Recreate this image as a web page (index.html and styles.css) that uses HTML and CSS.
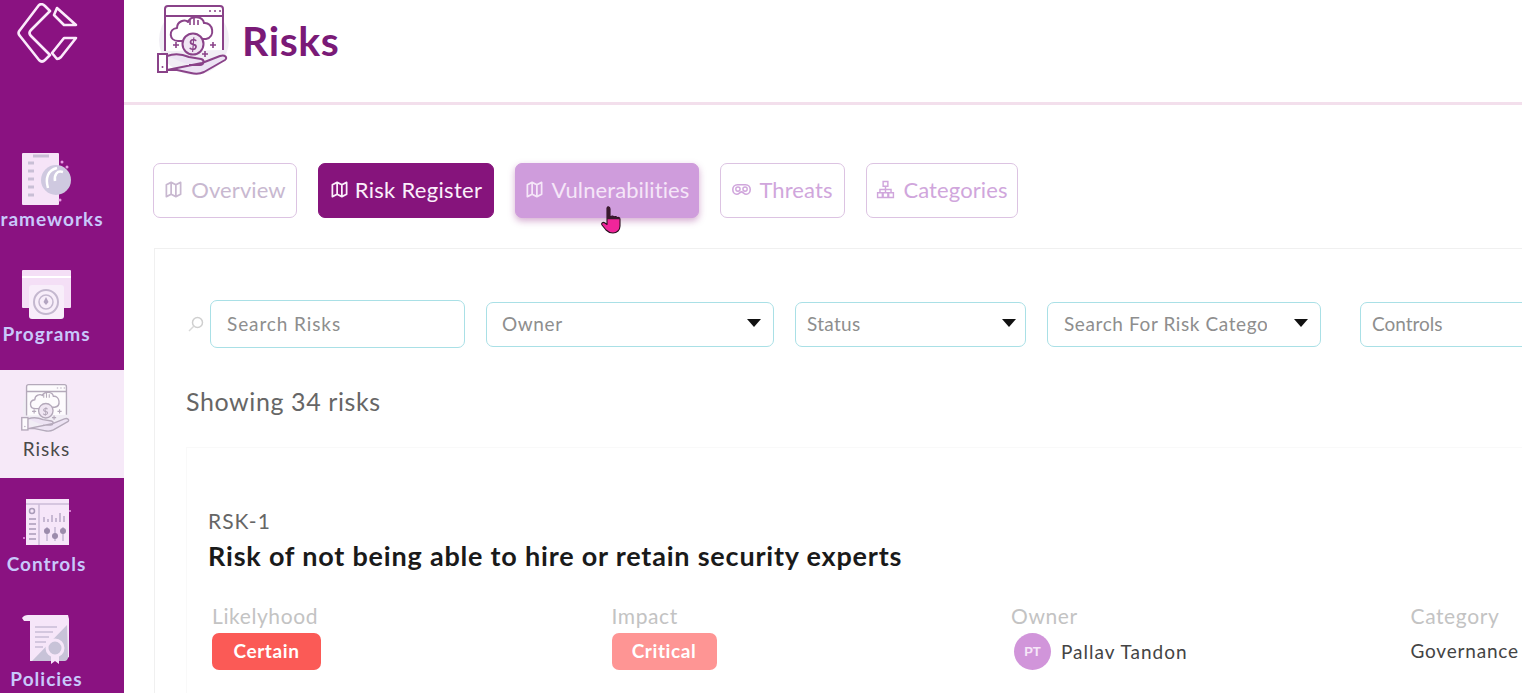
FILE: index.html
```html
<!DOCTYPE html>
<html lang="en">

<head>
  <meta charset="UTF-8">
  <title>Risks</title>
  <link rel="stylesheet" href="styles.css">
</head>

<body>
  <svg class="sprites" width="0" height="0">
    <symbol id="i-map" viewBox="0 0 24 24">
      <path d="M3 6l6-3 6 3 6-3v15l-6 3-6-3-6 3z M9 3v15 M15 6v15" fill="none" stroke="currentColor" stroke-width="2.2" stroke-linejoin="round" />
    </symbol>
    <symbol id="i-risk" viewBox="0 0 80 75">
      <circle cx="40" cy="36" r="35" fill="#f1eef5" class="blob" />
      <path d="M11 47V5q0-3 3-3h52q3 0 3 3v41" fill="#fff" stroke="currentColor" stroke-width="2" />
      <path d="M11 12h58" fill="none" stroke="currentColor" stroke-width="2" />
      <path d="M55 7h2M60 7h2M65 7h2" stroke="currentColor" stroke-width="1.6" />
      <path d="M30 37h-6c-9 0-10-12-1-13 0-7 8-9 11-6 3-7 15-6 16 1 9-1 12 14 2 16h-4" fill="#fff" stroke="currentColor" stroke-width="2" stroke-linejoin="round" />
      <path d="M36 16v5M40 14v7M44 16v5" stroke="currentColor" stroke-width="1.6" />
      <circle cx="39" cy="40" r="10.5" fill="#f0e6f3" stroke="currentColor" stroke-width="2" />
      <text x="39" y="45.5" text-anchor="middle" class="risk-dollar" fill="currentColor">$</text>
      <path d="M19 41h6M22 38v6M56 41h6M59 38v6M48 50h6M51 47v6" stroke="currentColor" stroke-width="1.6" />
      <path d="M13 52c8-3 15-2 22 1l12 2c4 1 3 6-1 6H35M48 59l18-7c5-2 8 2 5 4L50 68c-4 2-9 2-13 1l-14-3H13z" fill="#ece3f4" stroke="currentColor" stroke-width="2" stroke-linejoin="round" />
      <rect x="4" y="50" width="9" height="18" fill="#fff" stroke="currentColor" stroke-width="2" />
      <circle cx="8.500" cy="63" r="1" fill="currentColor" />
    </symbol>
  </svg>

  <div class="app">
    <aside class="sidebar">
      <div class="logo">
        <svg width="62" height="60" viewBox="0 0 62 60">
          <path d="M22 2Q25 0 28 3L33 8 14 27Q11 30 14 33L33 52 28 57Q25 60 22 57L3 33Q0 30 3 27Z" fill="none" stroke="#fbeafb" stroke-width="2.600" stroke-linejoin="round" />
          <path d="M40 5L59 22H47L37 12ZM59 35H47L35 50 40 56Q42 56 44 54Z" fill="none" stroke="#fbeafb" stroke-width="2.600" stroke-linejoin="round" />
        </svg>
      </div>
      <a href="#" class="nav-item">
        <svg class="nav-icon" viewBox="0 0 52 52">
          <rect x="1" y="0" width="37" height="52" rx="1" fill="#f6e4f8" />
          <path d="M12 3h16M7 10h6M7 18h6M7 26h6M7 34h6M7 42h6" stroke="#c9bfd6" stroke-width="3" />
          <circle cx="35" cy="27" r="15" fill="#cfc9e0" />
          <path d="M36 15c-9 2-12 10-9 20M42 19c-6-2-9 3-8 9" fill="none" stroke="#fff" stroke-width="2.500" />
          <circle cx="41" cy="9" r="1.500" fill="#e99be6" />
          <circle cx="46" cy="14" r="1.500" fill="#e99be6" />
          <circle cx="39" cy="47" r="1.500" fill="#e99be6" />
        </svg>
        <span>Frameworks</span>
      </a>
      <a href="#" class="nav-item">
        <svg class="nav-icon" viewBox="0 0 52 52">
          <rect x="1" y="2" width="49" height="38" rx="1" fill="#f4dff6" />
          <path d="M1 9h49" stroke="#fff" stroke-width="2" />
          <rect x="8" y="17" width="35" height="34" rx="3" fill="#f8eefa" />
          <circle cx="25" cy="34" r="12" fill="none" stroke="#c4b8cf" stroke-width="2" />
          <circle cx="25" cy="34" r="7" fill="none" stroke="#c4b8cf" stroke-width="1.500" />
          <path d="M25 29l2.500 5-2.500 3-2.500-3z" fill="#b3a5c1" />
        </svg>
        <span>Programs</span>
      </a>
      <a href="#" class="nav-item is-active">
        <svg class="nav-icon nav-icon-risk">
          <use href="#i-risk" />
        </svg>
        <span>Risks</span>
      </a>
      <a href="#" class="nav-item">
        <svg class="nav-icon" viewBox="0 0 52 52">
          <rect x="5" y="1" width="43" height="46" fill="#f6e6f9" />
          <path d="M5 6h43M18 6v41" stroke="#cbbcd8" stroke-width="1.500" />
          <circle cx="11" cy="13" r="2.500" fill="none" stroke="#a99bb8" stroke-width="1.500" />
          <path d="M8 21h7M8 26h7M8 31h7M8 36h7M8 41h7" stroke="#a99bb8" stroke-width="1.500" />
          <path d="M23 24v-5M27 24v-3M31 24v-7M35 24v-4M39 24v-9M43 24v-6" stroke="#b8a9c6" stroke-width="1.500" />
          <path d="M26 29v14M34 29v14M42 29v14" stroke="#c4b6d2" stroke-width="1.500" />
          <circle cx="26" cy="33" r="3" fill="#9c8bac" />
          <circle cx="34" cy="38" r="3" fill="#9c8bac" />
          <circle cx="42" cy="33" r="3" fill="#9c8bac" />
          <circle cx="49" cy="13" r="1" fill="#e99be6" />
          <circle cx="3" cy="40" r="1" fill="#e99be6" />
        </svg>
        <span>Controls</span>
      </a>
      <a href="#" class="nav-item">
        <svg class="nav-icon" viewBox="0 0 52 52">
          <path d="M1 5q2-3 6-3h40l1 4v38q-5 4-9 4H9V8H3z" fill="#f6e6f9" />
          <path d="M46 12L11 48h33q3-1 3-4z" fill="#c8c3d8" />
          <path d="M14 14h22M14 19h18M14 24h14M14 29h11M14 34h8" stroke="#c9bdd6" stroke-width="1.500" />
          <circle cx="34" cy="35" r="8" fill="none" stroke="#f6e6f9" stroke-width="3" />
          <path d="M30 42v9l4-3 4 3v-9z" fill="#f6e6f9" />
        </svg>
        <span>Policies</span>
      </a>
    </aside>

    <main class="content">
      <header class="page-head">
        <svg class="head-icon">
          <use href="#i-risk" />
        </svg>
        <h1>Risks</h1>
      </header>

      <nav class="tabs">
        <a href="#" class="tab tab-overview">
          <svg class="tab-icon"><use href="#i-map" /></svg>Overview
        </a>
        <a href="#" class="tab tab-register">
          <svg class="tab-icon"><use href="#i-map" /></svg>Risk Register
        </a>
        <a href="#" class="tab tab-vuln">
          <svg class="tab-icon"><use href="#i-map" /></svg>Vulnerabilities
        </a>
        <a href="#" class="tab tab-threats">
          <svg class="tab-icon" viewBox="0 0 24 24">
            <path d="M7 6h10c4 0 6 3 6 6s-2 6-5 6c-3 0-4-3-6-3s-3 3-6 3c-3 0-5-3-5-6s2-6 6-6z" fill="none" stroke="currentColor" stroke-width="2" />
            <circle cx="7.500" cy="11.500" r="2.700" fill="none" stroke="currentColor" stroke-width="1.800" />
            <circle cx="16.500" cy="11.500" r="2.700" fill="none" stroke="currentColor" stroke-width="1.800" />
          </svg>Threats
        </a>
        <a href="#" class="tab tab-categories">
          <svg class="tab-icon" viewBox="0 0 24 24">
            <path d="M9 2h6v6H9zM2 16h6v6H2zM9 16h6v6H9zM16 16h6v6h-6zM12 8v8M5 16v-4h14v4" fill="none" stroke="currentColor" stroke-width="1.800" />
          </svg>Categories
        </a>
      </nav>

      <section class="panel">
        <div class="filters">
          <svg class="search-icon" viewBox="0 0 16 16">
            <circle cx="9.500" cy="6.500" r="5" fill="none" stroke="#cfcfcf" stroke-width="1.500" />
            <path d="M6 10l-5 5" stroke="#d8d8d8" stroke-width="1.500" />
          </svg>
          <div class="field field-search">Search Risks</div>
          <div class="field field-owner">Owner<i class="caret"></i></div>
          <div class="field field-status">Status<i class="caret"></i></div>
          <div class="field field-category"><span class="clip">Search For Risk Category</span><i class="caret"></i></div>
          <div class="field field-controls">Controls</div>
        </div>

        <p class="count">Showing 34 risks</p>

        <article class="risk-card">
          <div class="risk-id">RSK-1</div>
          <h2>Risk of not being able to hire or retain security experts</h2>
          <div class="risk-meta">
            <div>
              <div class="meta-label">Likelyhood</div>
              <span class="chip chip-certain">Certain</span>
            </div>
            <div>
              <div class="meta-label">Impact</div>
              <span class="chip chip-critical">Critical</span>
            </div>
            <div>
              <div class="meta-label">Owner</div>
              <div class="meta-owner"><span class="avatar">PT</span>Pallav Tandon</div>
            </div>
            <div>
              <div class="meta-label">Category</div>
              <div class="meta-value">Governance</div>
            </div>
          </div>
        </article>
      </section>
    </main>
  </div>

  <!-- screen recording pointer over the Vulnerabilities tab -->
  <svg class="pointer" viewBox="0 0 22 28">
    <path d="M6 2c1-2 3-1 3 1v8l1-.5c1-1 2.500-.5 3 .5 1-1 2.500-.5 3 .7 1-.7 3-.2 3 1.500V20c0 4-3 7-7 7-3 0-5-1-7-3l-4-5c-1-2 1-3.500 3-2l2 1.500z" fill="#f0259a" stroke="#2a1020" stroke-width="1.100" stroke-linejoin="round" />
    <path d="M6 2c1-2 3-1 3 1v8l1-.5c1-1 2.500-.5 3 .5 1-1 2.500-.5 3 .7 1-.7 3-.2 3 1.500H6z" fill="#3a1a2e" />
  </svg>
</body>

</html>
```

FILE: styles.css
```css
* {
  box-sizing: border-box;
}

body,
h1,
h2,
p {
  margin: 0;
  padding: 0;
}

body {
  height: 100vh;
  overflow: hidden;
  font-family: "Lato", "Open Sans", sans-serif;
  color: #444;
  background: #fff;
}

a {
  text-decoration: none;
}

.sprites {
  position: absolute;
}

.risk-dollar {
  font-family: "Lato", sans-serif;
  font-size: 15px;
  font-weight: 700;
}

.app {
  display: flex;
  height: 693px;
}

/* sidebar */
.sidebar {
  flex: none;
  width: 124px;
  height: 100%;
  overflow: hidden;
  background: #8a1281;
}

.logo {
  height: 140px;
  padding: 3px 0 0 17px;
}

.logo svg {
  filter: blur(0.4px);
}

.nav-item {
  display: flex;
  flex-direction: column;
  align-items: center;
  width: 124px;
  height: 108px;
  margin-bottom: 7px;
  padding: 13px 31px 0 0;
  color: #c8c8fb;
  font-size: 19px;
  font-weight: 700;
  letter-spacing: 1px;
  line-height: 20px;
}

.nav-item span {
  margin-top: 4px;
  white-space: nowrap;
}

.nav-item.is-active {
  background: #f6e9f8;
  color: #4a4a4a;
  font-weight: 400;
}

.nav-icon {
  flex: none;
  width: 52px;
  height: 52px;
  filter: blur(0.5px);
}

.nav-icon-risk {
  width: 55px;
  color: #a99eb0;
  opacity: 0.85;
}

.nav-icon-risk .blob {
  display: none;
}

/* main column */
.content {
  flex: 1;
  min-width: 0;
  overflow: hidden;
}

.page-head {
  display: flex;
  align-items: center;
  gap: 8px;
  height: 105px;
  padding: 0 0 20px 30px;
  border-bottom: 3px solid #f3dfec;
}

.head-icon {
  flex: none;
  width: 80px;
  height: 75px;
  color: #8a4389;
  filter: blur(0.4px);
}

.page-head h1 {
  color: #7a1a77;
  font-size: 41px;
  font-weight: 700;
  letter-spacing: 0.6px;
  line-height: 50px;
}

.tabs {
  display: flex;
  gap: 21px;
  padding: 58px 0 0 29px;
}

.tab {
  display: flex;
  align-items: center;
  justify-content: center;
  gap: 8px;
  height: 55px;
  padding-bottom: 3px;
  border: 1.500px solid #dcc3e2;
  border-radius: 7px;
  color: #d0a6dc;
  font-size: 22px;
  letter-spacing: 0.1px;
}

.tab-overview {
  width: 144px;
  color: #c8b8d0;
}

.tab-register {
  gap: 6px;
  width: 176px;
  border-color: #86147c;
  background: #86147c;
  color: #fbeffb;
  letter-spacing: 0.3px;
}

.tab-vuln {
  width: 184px;
  border-color: #cf9cdc;
  background: #cf9cdc;
  color: #f5e6f8;
  box-shadow: 0 3px 7px rgba(134, 20, 124, 0.35);
}

.tab-threats {
  width: 125px;
}

.tab-categories {
  width: 152px;
}

.tab-icon {
  flex: none;
  width: 19px;
  height: 19px;
}

.panel {
  width: 1500px;
  height: 500px;
  margin: 30px 0 0 30px;
  padding: 51px 0 0 33px;
  border: 1px solid #f0f0f0;
  border-right: 0;
}

.filters {
  display: flex;
  align-items: center;
  gap: 21px;
  height: 48px;
}

.search-icon {
  flex: none;
  width: 16px;
  height: 16px;
  margin-right: -15px;
}

.field {
  display: flex;
  align-items: center;
  justify-content: space-between;
  flex: none;
  height: 45px;
  padding: 0 12px 2px 15px;
  border: 1.500px solid #a9e0e6;
  border-radius: 7px;
  color: #8e8e8e;
  font-size: 19px;
  letter-spacing: 0.3px;
  white-space: nowrap;
}

.field-search {
  width: 255px;
  height: 48px;
  padding-left: 16px;
  letter-spacing: 0.9px;
}

.field-owner {
  width: 288px;
  letter-spacing: 0.6px;
}

.field-status {
  width: 231px;
  padding-right: 9px;
  padding-left: 11px;
}

.field-category {
  width: 274px;
  padding-left: 16px;
  letter-spacing: 0.6px;
}

.field-controls {
  width: 300px;
  margin-left: 18px;
  padding-left: 11px;
  letter-spacing: 0;
}

.clip {
  width: 203px;
  overflow: hidden;
}

.caret {
  flex: none;
  width: 0;
  height: 0;
  border-top: 8px solid #111;
  border-left: 7px solid transparent;
  border-right: 7px solid transparent;
}

.count {
  margin: 38px 0 0 -2px;
  color: #666;
  font-size: 25px;
  letter-spacing: 0.6px;
  line-height: 30px;
}

.risk-card {
  height: 300px;
  margin: 31px 0 0 -2px;
  padding: 61px 0 0 21px;
  border-top: 1px solid #f9f9f9;
  border-left: 1px solid #f9f9f9;
}

.risk-id {
  color: #666;
  font-size: 21px;
  letter-spacing: 1px;
  line-height: 24px;
}

.risk-card h2 {
  margin-top: 5px;
  color: #1a1a1a;
  font-size: 27px;
  font-weight: 700;
  letter-spacing: 0.8px;
  line-height: 36px;
}

.risk-meta {
  display: grid;
  grid-template-columns: repeat(4, 399.500px);
  margin-top: 30px;
  padding-left: 4px;
}

.meta-label {
  margin-bottom: 5px;
  color: #c3c3c3;
  font-size: 21px;
  letter-spacing: 0.6px;
  line-height: 24px;
}

.chip {
  display: inline-flex;
  align-items: center;
  justify-content: center;
  height: 37px;
  padding-bottom: 2px;
  border-radius: 7px;
  color: #fff;
  font-size: 19px;
  font-weight: 700;
  letter-spacing: 0.6px;
}

.chip-certain {
  width: 109px;
  background: #fb5a56;
}

.chip-critical {
  width: 105px;
  background: #fe9594;
}

.meta-owner,
.meta-value {
  display: flex;
  align-items: center;
  height: 37px;
  color: #444;
  font-size: 19px;
  letter-spacing: 0.8px;
}

.meta-value {
  padding-bottom: 2px;
}

.meta-owner {
  gap: 10px;
  padding-left: 3px;
  letter-spacing: 1px;
}

.avatar {
  display: flex;
  align-items: center;
  justify-content: center;
  width: 37px;
  height: 37px;
  border-radius: 50%;
  background: #d195da;
  color: #f6e6f8;
  font-family: "Liberation Sans", sans-serif;
  font-size: 13px;
  font-weight: 700;
  letter-spacing: 0;
}

.pointer {
  position: absolute;
  left: 601px;
  top: 206px;
  width: 22px;
  height: 28px;
}
```
